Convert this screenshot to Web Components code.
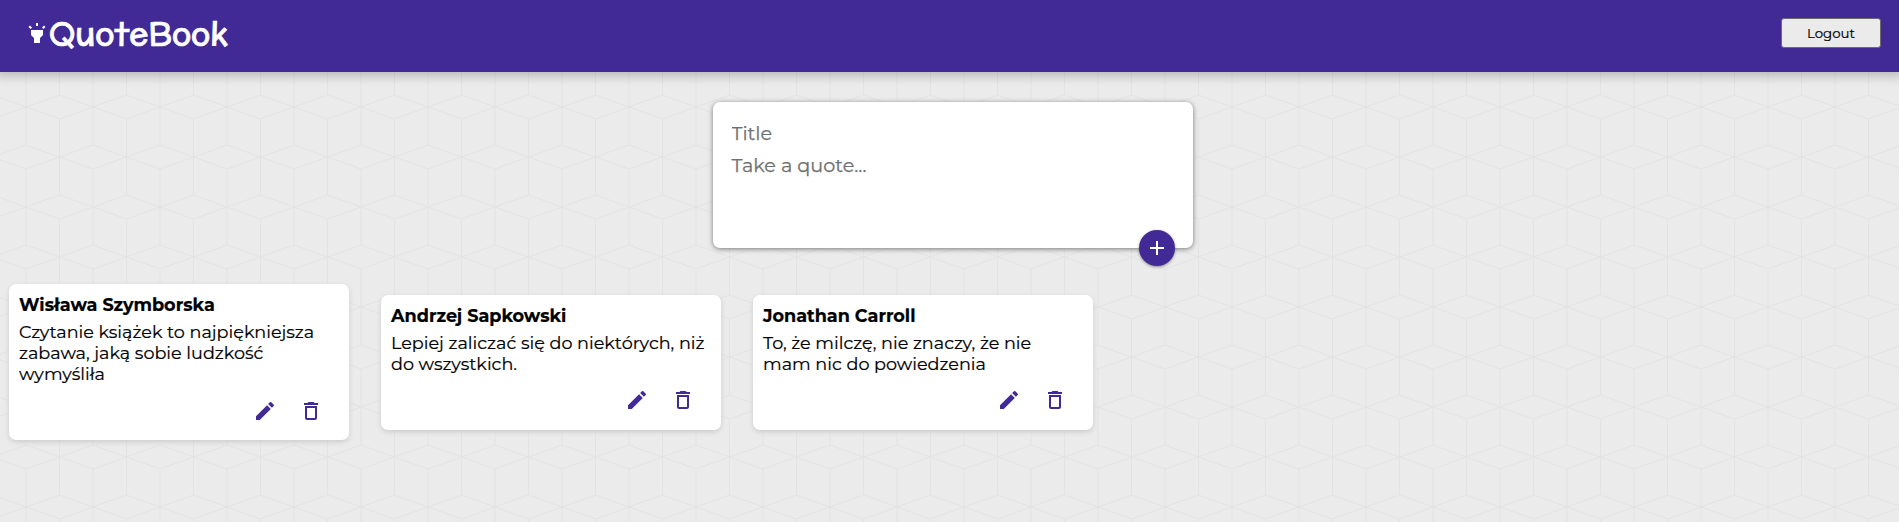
<!DOCTYPE html>
<html lang="pl">
<head>
<meta charset="utf-8">
<title>QuoteBook</title>
<style>
  html { height: 100%; }
  body {
    margin: 0;
    min-height: 100%;
    font-family: Montserrat, Inter, "Noto Sans", sans-serif;
    color: #000;
    background: #ebebeb url("data:image/svg+xml,%3Csvg xmlns='http://www.w3.org/2000/svg' width='67' height='100' viewBox='0 0 67 100'%3E%3Cg fill='none' stroke='%23e3e3e3' stroke-width='1'%3E%3Cpath d='M0 0L33.5 12L67 0M0 100L33.5 88L67 100M0 38L33.5 50L67 38M0 62L33.5 50L67 62M33.5 12V88M0 0V38M67 0V38M0 62V100M67 62V100'/%3E%3C/g%3E%3C/svg%3E") 25.5px 7px;
  }
</style>
</head>
<body>
<quote-app></quote-app>
<script>
const define = (name, html) => customElements.define(name, class extends HTMLElement {
  constructor() {
    super();
    const t = document.createElement('template');
    t.innerHTML = html;
    this.attachShadow({ mode: 'open' }).append(t.content.cloneNode(true));
  }
});

define('app-logo', `
  <style>
    :host { display: flex; align-items: center; color: #fff; }
    svg { display: block; width: 24px; height: 24px; }
    h1 { margin: 0; font: 400 32px/40px McLaren, Lato, cursive; white-space: nowrap; -webkit-text-stroke: .7px #fff; }
  </style>
  <svg viewBox="0 0 24 24" fill="#fff">
    <path d="M6 14l3 3v5h6v-5l3-3V9H6zM11 2h2v3h-2zM3.5 5.875L4.914 4.46l2.12 2.122L5.62 7.997zM16.96 6.585l2.123-2.12 1.414 1.414L18.375 8z"/>
  </svg>
  <h1>QuoteBook</h1>`);

define('logout-button', `
  <style>
    :host { display: block; }
    button { display: block; box-sizing: border-box; width: 100px; height: 30px; padding: 0; border: 1px solid #6b6b6b; border-radius: 3px; background: #ebebeb; color: #000; font: 13.333px/28px Montserrat, Inter, sans-serif; -webkit-text-stroke: .2px; }
  </style>
  <button><slot></slot></button>`);

define('app-header', `
  <style>
    :host { display: flex; justify-content: space-between; align-items: flex-start; box-sizing: border-box; height: 72px; padding: 13px 18px 0 25px; background: #412a95; box-shadow: 0 0 10px 4px rgba(0,0,0,.22); }
    logout-button { margin-top: 5px; }
  </style>
  <app-logo></app-logo>
  <logout-button>Logout</logout-button>`);

define('quote-form', `
  <style>
    :host { display: block; position: relative; box-sizing: border-box; width: 480px; height: 146px; padding: 17px 15px; border-radius: 7px; background: #fff; box-shadow: 0 1px 5px rgb(120,120,120); }
    input, textarea { display: block; box-sizing: border-box; width: 100%; border: 0; outline: 0; padding: 0 4px; background: none; resize: none; font: 19.2px/24px Montserrat, Inter, sans-serif; -webkit-text-stroke: .25px #707070; }
    input { height: 28px; }
    textarea { height: 72px; margin-top: 6px; }
    ::placeholder { color: #707070; opacity: 1; }
    button { position: absolute; right: 18px; bottom: -18px; width: 36px; height: 36px; padding: 0; border: 0; border-radius: 50%; display: grid; place-items: center; background: #412a95; box-shadow: 0 1px 3px rgba(0,0,0,.4); }
    svg { width: 24px; height: 24px; fill: #fff; }
  </style>
  <input placeholder="Title">
  <textarea placeholder="Take a quote..."></textarea>
  <button aria-label="Add"><svg viewBox="0 0 24 24"><path d="M19 13h-6v6h-2v-6H5v-2h6V5h2v6h6v2z"/></svg></button>`);

define('quote-card', `
  <style>
    :host { display: block; box-sizing: border-box; width: 340px; padding: 10px 10px 17.6px; border-radius: 7px; background: #fff; box-shadow: 0 2px 5px #ccc; -webkit-text-stroke: .2px #000; }
    h2 { margin: 0 0 6px; font-size: 17.6px; line-height: 21px; font-weight: 700; }
    p { margin: 0 0 14.6px; font-size: 17.6px; line-height: 21px; white-space: pre-line; }
    footer { display: flex; justify-content: flex-end; gap: 22px; padding-right: 16px; }
    svg { width: 24px; height: 24px; fill: #412a95; }
  </style>
  <h2><slot name="title"></slot></h2>
  <p><slot></slot></p>
  <footer>
    <svg viewBox="0 0 24 24"><path d="M3 17.25V21h3.75L17.81 9.94l-3.75-3.75L3 17.25zM20.71 7.04a1 1 0 0 0 0-1.41l-2.34-2.34a1 1 0 0 0-1.41 0l-1.83 1.83 3.75 3.75 1.83-1.83z"/></svg>
    <svg viewBox="0 0 24 24"><path d="M6 19c0 1.1.9 2 2 2h8c1.1 0 2-.9 2-2V7H6v12zM8 9h8v10H8V9zm7.5-5l-1-1h-5l-1 1H5v2h14V4z"/></svg>
  </footer>`);

define('quote-app', `
  <style>
    :host { display: block; }
    quote-form { margin: 30px auto 36px; left: 3px; }
    main { display: flex; align-items: center; gap: 32px; padding-left: 9px; }
  </style>
  <app-header></app-header>
  <quote-form></quote-form>
  <main>
    <quote-card><span slot="title">Wisława Szymborska</span>Czytanie książek to najpiękniejsza
zabawa, jaką sobie ludzkość
wymyśliła</quote-card>
    <quote-card><span slot="title">Andrzej Sapkowski</span>Lepiej zaliczać się do niektórych, niż
do wszystkich.</quote-card>
    <quote-card><span slot="title">Jonathan Carroll</span>To, że milczę, nie znaczy, że nie
mam nic do powiedzenia</quote-card>
  </main>`);
</script>
</body>
</html>
